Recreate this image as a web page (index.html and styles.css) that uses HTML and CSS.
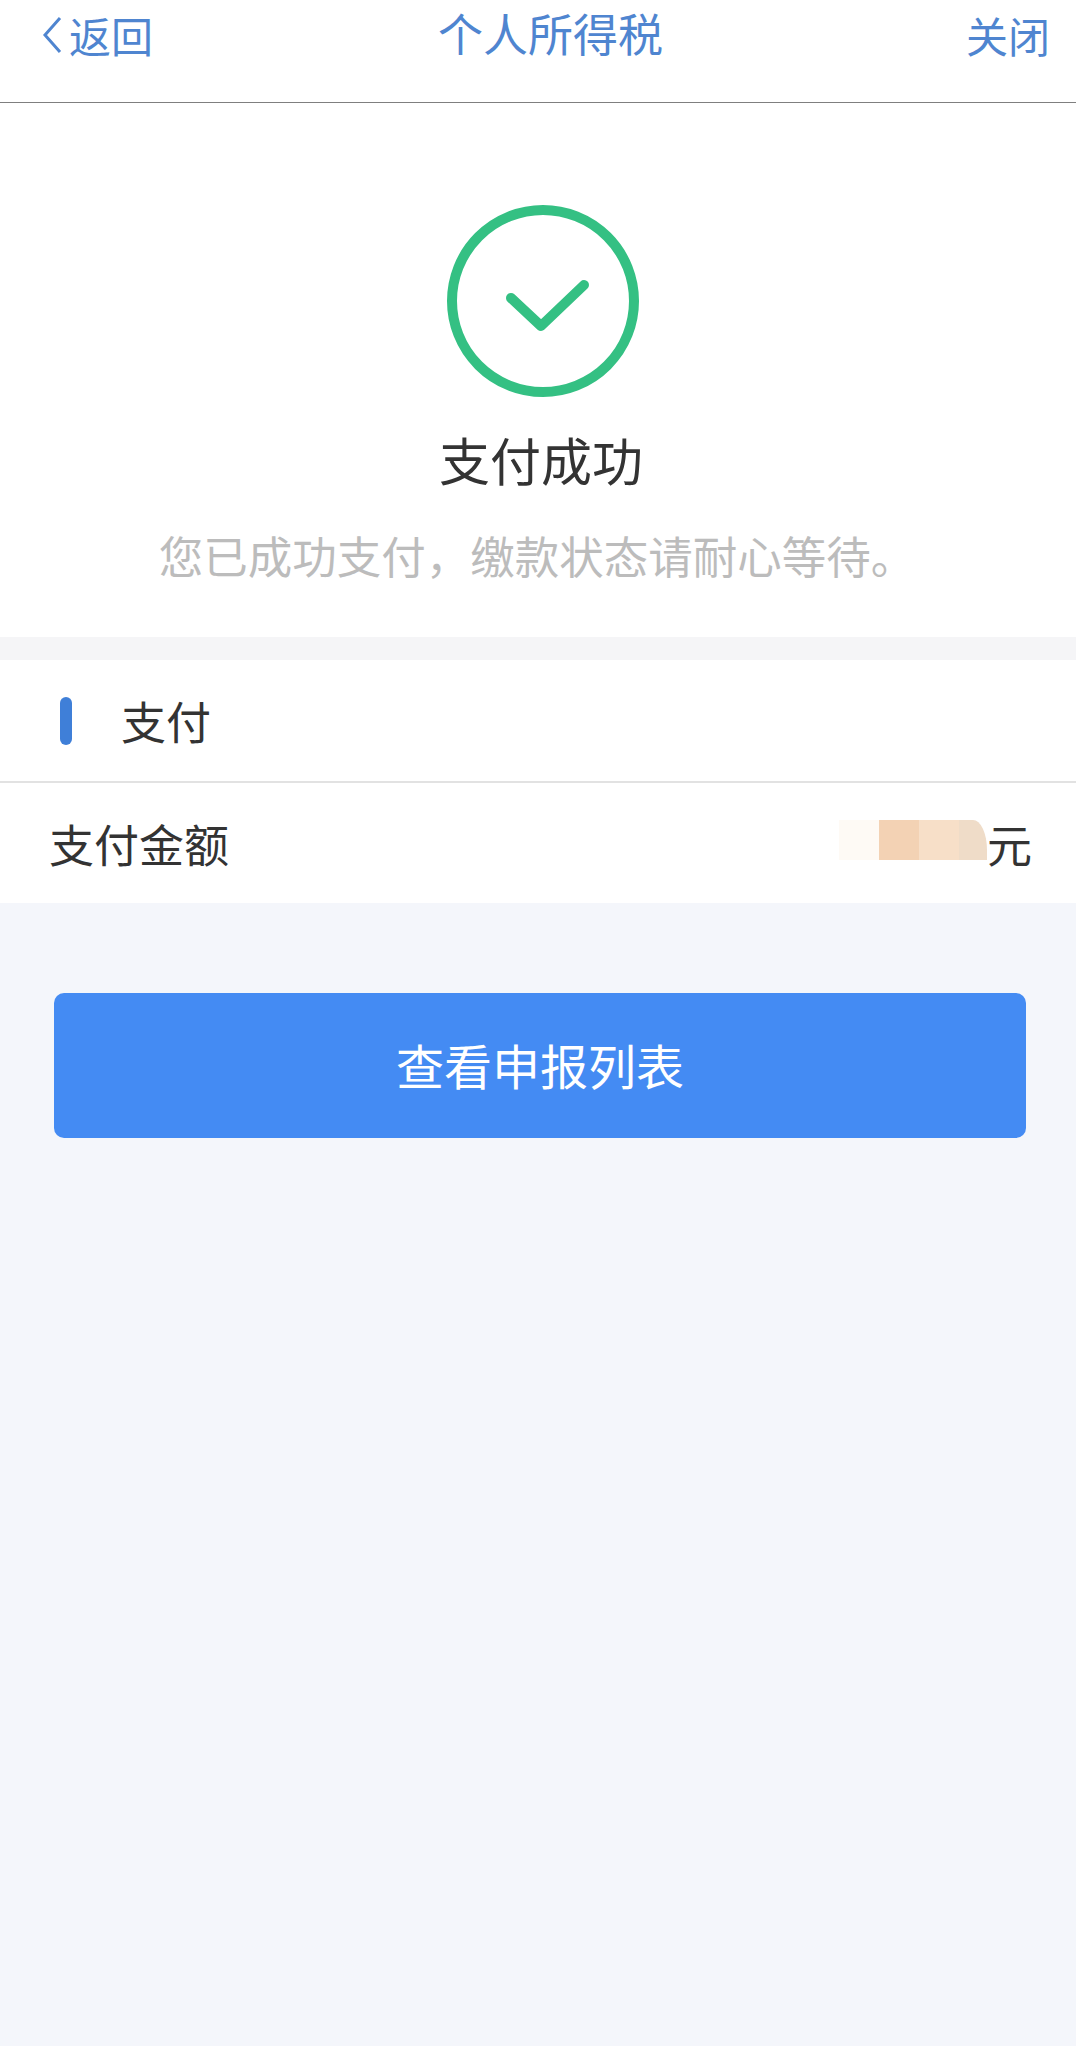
FILE: index.html
```html
<!DOCTYPE html>
<html lang="zh-CN">
<head>
  <meta charset="UTF-8" />
  <meta name="viewport" content="width=device-width, initial-scale=1.0"/>
  <title>个人所得税</title>
  <link rel="stylesheet" href="styles.css">
</head>
<body>
  <header class="topbar">
    <div class="back">
      <svg class="chevron" width="20" height="38" viewBox="0 0 20 38">
        <path d="M18 2 L3 19 L18 36" fill="none" stroke="#4f85d0" stroke-width="3"/>
      </svg>
      <span>返回</span>
    </div>
    <div class="topbar-title">个人所得税</div>
    <div class="close">关闭</div>
  </header>

  <section class="result">
    <svg class="result-icon" width="192" height="192" viewBox="0 0 192 192">
      <circle cx="96" cy="96" r="91" fill="none" stroke="#34c083" stroke-width="10"/>
      <path d="M64 93 L94 121 L137 80" fill="none" stroke="#34c083" stroke-width="10" stroke-linecap="round" stroke-linejoin="round"/>
    </svg>
    <h1 class="result-title">支付成功</h1>
    <p class="result-note">您已成功支付，缴款状态请耐心等待。</p>
  </section>

  <section class="detail">
    <div class="detail-head">
      <span class="detail-mark"></span>
      <span>支付</span>
    </div>
    <div class="detail-row">
      <span>支付金额</span>
      <span class="amount">
        <span class="amount-mask">
          <i class="mask-a"></i><i class="mask-b"></i><i class="mask-c"></i><i class="mask-d"></i>
        </span>
        <span>元</span>
      </span>
    </div>
  </section>

  <div class="action">
    <div class="btn">查看申报列表</div>
  </div>
</body>
</html>
```
FILE: styles.css
```css
* {
  margin: 0; padding: 0; box-sizing: border-box;
  font-family: "Noto Sans CJK SC", "Liberation Sans", sans-serif;
}

html, body {
  width: 100%;
  height: 100%;
  overflow: hidden;
  background: #f4f6fb;
}

.topbar {
  display: flex;
  justify-content: space-between;
  align-items: flex-start;
  height: 103px;
  padding: 10px 26px 0 42px;
  background: #fff;
  border-bottom: 1px solid #7f7f7f;
  color: #4f85d0;
  font-size: 42px;
  line-height: 50px;
}

.back {
  display: flex;
  align-items: center;
  gap: 7px;
}

.topbar-title {
  font-size: 45px;
  margin-right: 18px;
  margin-top: -2px;
}

.result {
  display: flex;
  flex-direction: column;
  align-items: center;
  padding: 102px 0 52px 6px;
  background: #fff;
  border-bottom: 23px solid #f5f5f7;
}

.result-icon {
  margin-left: 4px;
}

.result-title {
  margin-top: 32px;
  font-size: 51px;
  line-height: 60px;
  font-weight: 400;
  color: #333;
}

.result-note {
  margin-top: 36px;
  margin-right: 8px;
  font-size: 44.5px;
  line-height: 60px;
  color: #bcbcbc;
}

.detail {
  background: #fff;
  color: #333;
  font-size: 45px;
}

.detail-head {
  display: flex;
  align-items: center;
  gap: 49px;
  height: 123px;
  padding-left: 60px;
  border-bottom: 2px solid #e2e2e2;
}

.detail-mark {
  width: 12px;
  height: 48px;
  border-radius: 6px;
  background: #3f7fd8;
}

.detail-row {
  display: flex;
  justify-content: space-between;
  align-items: center;
  height: 120px;
  padding: 0 44px 0 49px;
}

.amount {
  display: flex;
  align-items: center;
}

.amount-mask {
  display: flex;
  height: 40px;
  margin-top: -6px;
}

.amount-mask i {
  display: block;
  height: 100%;
}

.mask-a { width: 40px; background: #fefaf5; }
.mask-b { width: 40px; background: #f3d2b4; }
.mask-c { width: 40px; background: #f7dfc8; }
.mask-d { width: 28px; background: #efdcc8; border-top-right-radius: 14px 30px; }

.action {
  padding: 90px 50px 0 54px;
}

.btn {
  display: flex;
  align-items: center;
  justify-content: center;
  height: 145px;
  border-radius: 10px;
  background: #448bf3;
  color: #fff;
  font-size: 48px;
  padding-bottom: 4px;
}
```
